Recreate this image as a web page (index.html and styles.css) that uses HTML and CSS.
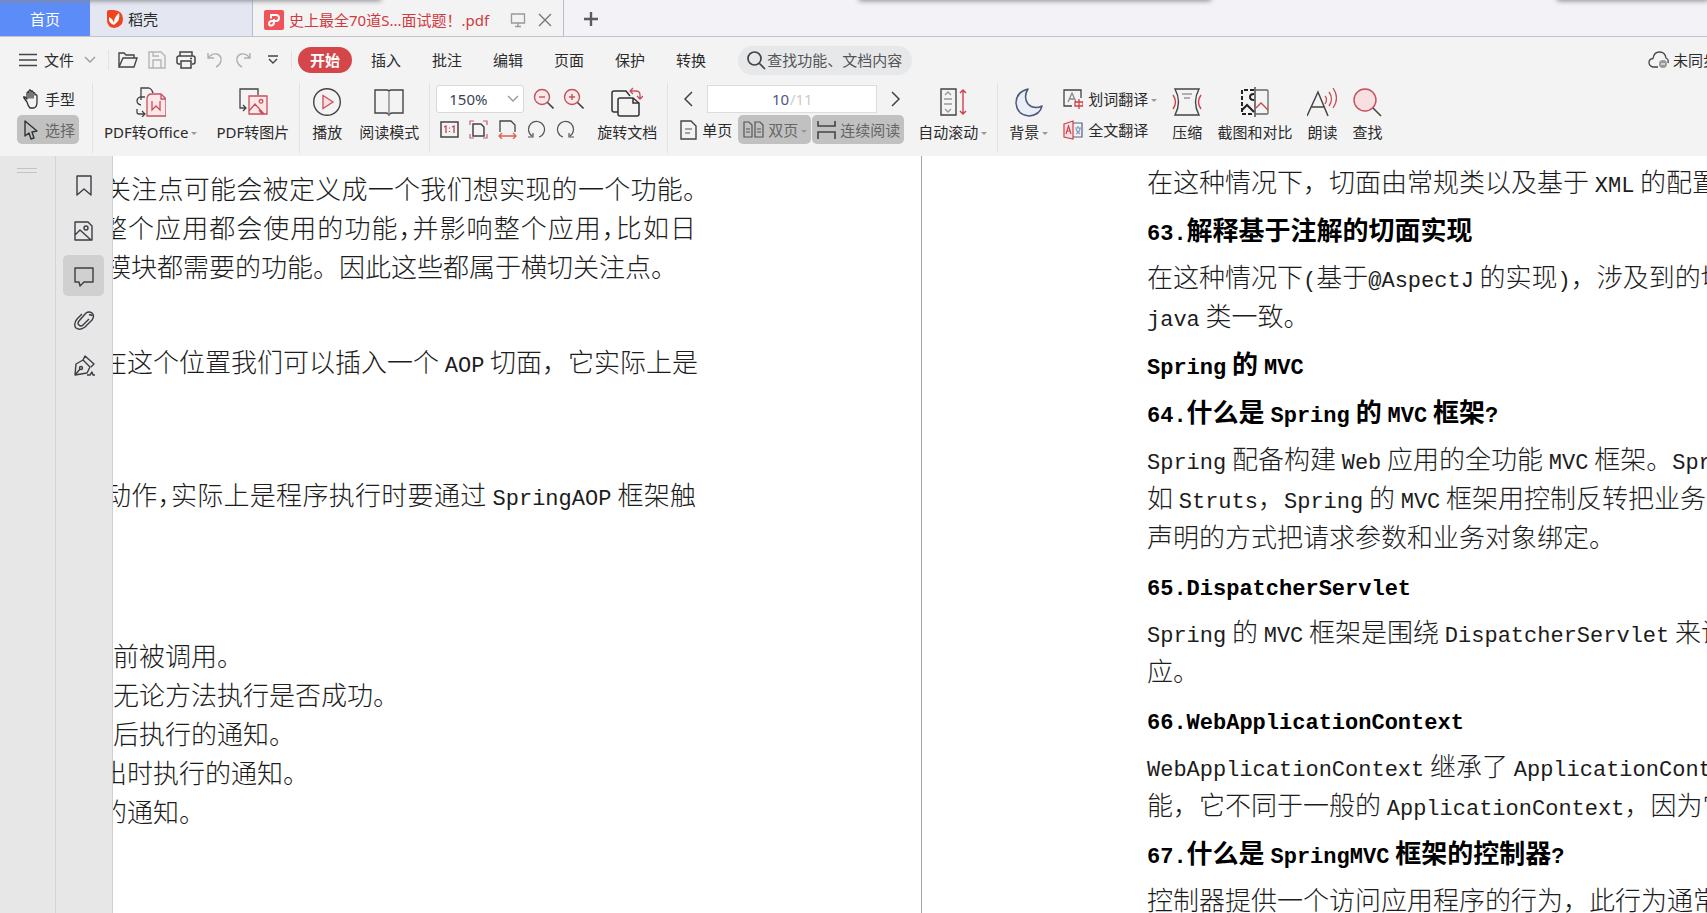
FILE: index.html
```html
<!DOCTYPE html>
<html lang="zh-CN">
<head>
<meta charset="utf-8">
<title>PDF 阅读器</title>
<link rel="stylesheet" href="styles.css">
</head>
<body>
<header class="tabbar">
  <span class="shade shade-left"></span><span class="shade shade-mid"></span><span class="shade shade-right"></span>
  <button class="tab tab-home">首页</button>
  <button class="tab tab-docer">
    <svg width="17" height="20" viewBox="0 0 17 20"><path d="M1 3Q1 1 3 1H8Q17 2 17 10T8 19Q1 18 1 11Z" fill="#f0441f"/><path d="M8 16Q2 14 3 8Q7 10 8 14Q8 8 13 4Q15 11 8 16Z" fill="#fff"/></svg>
    <span>稻壳</span>
  </button>
  <div class="tab tab-active">
    <svg width="20" height="20" viewBox="0 0 20 20"><rect width="20" height="20" rx="2" fill="#f0525a"/><path d="M7 8.500V5h5a3 3 0 0 1 0 6H8q-3 0-3 2.500t2.500 2Q10 15 10 12V9" fill="none" stroke="#fff" stroke-width="2"/></svg>
    <span class="tab-title">史上最全70道S...面试题！.pdf</span>
    <svg class="tab-screen" width="16" height="16" viewBox="0 0 16 16" fill="none" stroke="#999" stroke-width="1.3"><path d="M1.5 2h13v9h-13zM8 11v3M5 14.5h6"/></svg>
    <button class="plain" aria-label="关闭"><svg width="14" height="14" viewBox="0 0 14 14" stroke="#777" stroke-width="1.4"><path d="M1 1l12 12M13 1L1 13"/></svg></button>
  </div>
  <button class="plain tab-add" aria-label="新建"><svg width="16" height="16" viewBox="0 0 16 16" stroke="#5a5a60" stroke-width="2.4"><path d="M8 1v14M1 8h14"/></svg></button>
</header>

<nav class="menubar">
  <button class="plain file">
    <svg width="18" height="14" viewBox="0 0 18 14" stroke="#444" stroke-width="1.3"><path d="M0 1.5h18M0 7h18M0 12.5h18"/></svg>
    <span>文件</span>
    <svg class="file-arrow" width="12" height="8" viewBox="0 0 12 8" fill="none" stroke="#999" stroke-width="1.3"><path d="M1 1l5 5 5-5"/></svg>
  </button>
  <div class="quick">
    <button class="plain" aria-label="打开"><svg width="20" height="18" viewBox="0 0 20 18" fill="none" stroke="#444" stroke-width="1.4"><path d="M1 16V2h5l2 2h8v3M1 16L5 7h14l-3 9z"/></svg></button>
    <button class="plain" aria-label="保存"><svg width="18" height="18" viewBox="0 0 18 18" fill="none" stroke="#b5b5b5" stroke-width="1.4"><path d="M1 1h12l4 4v12H1zM5 17V9h8v8M5 1v4h6"/></svg></button>
    <button class="plain" aria-label="打印"><svg width="20" height="18" viewBox="0 0 20 18" fill="none" stroke="#444" stroke-width="1.5"><path d="M4 5V1h12v4M4 13H3q-2 0-2-2V7q0-2 2-2h14q2 0 2 2v4q0 2-2 2h-1M5 10h10v7H5zM14 7.500h2"/></svg></button>
    <button class="plain" aria-label="撤销"><svg width="18" height="16" viewBox="0 0 18 16" fill="none" stroke="#b0b0b0" stroke-width="1.4"><path d="M2 1v5h6M2 6q4-5 9-4 5 2 4 7-1 4-5 6"/></svg></button>
    <button class="plain" aria-label="恢复"><svg width="18" height="16" viewBox="0 0 18 16" fill="none" stroke="#b0b0b0" stroke-width="1.4"><path d="M16 1v5h-6M16 6q-4-5-9-4-5 2-4 7 1 4 5 6"/></svg></button>
    <button class="plain" aria-label="自定义"><svg width="10" height="10" viewBox="0 0 10 10" fill="none" stroke="#444" stroke-width="1.4"><path d="M0 1h10M1 4l4 4 4-4"/></svg></button>
  </div>
  <button class="pill">开始</button>
  <div class="menus">
    <button class="plain">插入</button><button class="plain">批注</button><button class="plain">编辑</button><button class="plain">页面</button><button class="plain">保护</button><button class="plain">转换</button>
  </div>
  <label class="search">
    <svg width="19" height="19" viewBox="0 0 19 19" fill="none" stroke="#444" stroke-width="1.7"><circle cx="7.500" cy="7.500" r="6.500"/><path d="M12 12l6 6"/></svg>
    <input type="text" aria-label="查找" placeholder="查找功能、文档内容">
  </label>
  <button class="plain sync">
    <svg width="21" height="18" viewBox="0 0 21 18" fill="none" stroke="#444" stroke-width="1.3"><path d="M10 16H5Q1 15 1 11.500T5 7.500Q6 1 11.500 1T18 7q3 1 2 5"/><circle cx="15" cy="13" r="4" fill="#999" stroke="none"/><path d="M13 13h4" stroke="#eee"/></svg>
    <span>未同步</span>
  </button>
</nav>

<section class="ribbon">
  <div class="group g-select">
    <div class="rows">
      <button class="small"><svg width="18" height="20" viewBox="0 0 18 20" fill="none" stroke="#333" stroke-width="1.3" stroke-linejoin="round"><path d="M5 13L2 9Q1 7 3 8l2 2V4q1-2 2 0V9V2q1-2 2 0V9V3q1-2 2 0v6V4q2-1 2 1v1q2-1 2 1v6q0 5-3 6H8q-2-2-3-6z"/></svg><span>手型</span></button>
      <button class="small pressed"><svg width="18" height="20" viewBox="0 0 18 20" fill="none" stroke="#333" stroke-width="1.4" stroke-linejoin="round"><path d="M3 1v15l4-3 2 6 3-1-2-6 5-1z"/></svg><span>选择</span></button>
    </div>
  </div>

  <div class="group g-convert">
    <button class="big"><svg width="30" height="30" viewBox="0 0 30 30" fill="none" stroke="#444" stroke-width="1.3"><path d="M5 13V1h8q3 1 4 5M9 10H4Q1 11 1 14t4 4M1 22v3q0 2 2 2h6M6 24l3 3-3 3"/><path d="M11 12q0-5 5-5h9l5 5v17H11z" fill="#fbe6e8" stroke="#c8505c"/><path d="M25 7v5h5M16 14v9l4-4 4 4v-9" stroke="#c8505c"/></svg><span>PDF转Office<i class="caret"></i></span></button>
    <button class="big"><svg width="30" height="30" viewBox="0 0 30 30" fill="none" stroke="#444" stroke-width="1.3"><path d="M20 8V2H2v19h5M5 18l3 3-3 3"/><path d="M11 9h18v18H11z" fill="#fbe6e8" stroke="#c8505c"/><path d="M11 24l6-7 9 10M24 27l-3-4M23 12.500a1.800 1.800 0 1 0 .1 0" stroke="#c8505c"/></svg><span>PDF转图片</span></button>
  </div>

  <div class="group g-view">
    <button class="big"><svg width="30" height="30" viewBox="0 0 30 30" fill="none" stroke="#444" stroke-width="1.4"><circle cx="15" cy="15" r="13.300"/><path d="M11 8.500v13L21 15z" fill="#fadfe2" stroke="#d05560"/></svg><span>播放</span></button>
    <button class="big"><svg width="30" height="30" viewBox="0 0 30 30" fill="none" stroke="#444" stroke-width="1.4"><path d="M15 4q-1-1-2-1H1v23h11q2 0 3 2 1-2 3-2h11V3H17q-1 0-2 1z"/><path d="M15 4v24" stroke="#888"/></svg><span>阅读模式</span></button>
  </div>

  <div class="group g-zoom">
    <div class="rows">
      <div class="row zoom-row">
        <div class="select-wrap">
          <select aria-label="缩放比例"><option>150%</option></select>
          <svg width="12" height="8" viewBox="0 0 12 8" fill="none" stroke="#999" stroke-width="1.4"><path d="M1 1l5 5 5-5"/></svg>
        </div>
        <button class="plain" aria-label="缩小"><svg width="21" height="21" viewBox="0 0 21 21" fill="none" stroke="#c4525c" stroke-width="1.4"><circle cx="9" cy="9" r="7.500" fill="#fbe9ea"/><path d="M6 9h6"/><path d="M14.500 14.500l6 6" stroke="#444" stroke-width="1.600"/></svg></button>
        <button class="plain" aria-label="放大"><svg width="21" height="21" viewBox="0 0 21 21" fill="none" stroke="#c4525c" stroke-width="1.4"><circle cx="9" cy="9" r="7.500" fill="#fbe9ea"/><path d="M6 9h6M9 6v6"/><path d="M14.500 14.500l6 6" stroke="#444" stroke-width="1.600"/></svg></button>
      </div>
      <div class="row tools-row">
        <button class="plain" aria-label="实际大小"><svg width="19" height="19" viewBox="0 0 19 19" fill="none" stroke="#444" stroke-width="1.5"><path d="M1 2h17v15H1z"/><path d="M4 7l2-1v7M12 7l2-1v7M9.500 7.500v1M9.500 11v1" stroke="#c4404c" stroke-width="1.300"/></svg></button>
        <button class="plain" aria-label="适合页面"><svg width="19" height="19" viewBox="0 0 19 19" fill="none" stroke="#444" stroke-width="1.5"><path d="M4 4h8l3 3v9H4z"/><path d="M1 5V1h4M14 1h4v4M18 14v4h-4M5 18H1v-4" stroke="#c8606a" stroke-width="1.200"/></svg></button>
        <button class="plain" aria-label="适合宽度"><svg width="19" height="19" viewBox="0 0 19 19" fill="none" stroke="#444" stroke-width="1.3"><path d="M2 12V1h11l4 4v7"/><path d="M1 16h17M4 13l-3 3 3 3M15 13l3 3-3 3" stroke="#d9604f"/></svg></button>
        <button class="plain" aria-label="左旋"><svg width="19" height="19" viewBox="0 0 19 19" fill="none" stroke="#555" stroke-width="1.2"><path d="M12 17A8 8 0 1 0 5 16M1 17h5v-4"/></svg></button>
        <button class="plain" aria-label="右旋"><svg width="19" height="19" viewBox="0 0 19 19" fill="none" stroke="#555" stroke-width="1.2"><path d="M7 17A8 8 0 1 1 14 16M18 17h-5v-4"/></svg></button>
      </div>
    </div>
    <button class="big"><svg width="32" height="30" viewBox="0 0 32 30" fill="none" stroke="#333" stroke-width="1.5"><path d="M7 25H3q-2 0-2-2V6q0-2 2-2h12l4 5M7 13q0-2 2-2h13l6 5v11q0 2-2 2H9q-2 0-2-2z"/><path d="M22 11v5h6" /><path d="M22 1l-3 3 3 3M19 4h6q4 0 4 4v3M26 9l3 3 3-3" stroke="#c8505c" stroke-width="1.300"/></svg><span>旋转文档</span></button>
  </div>

  <div class="group g-page">
    <div class="rows">
      <div class="row pager">
        <button class="plain" aria-label="上一页"><svg width="10" height="16" viewBox="0 0 10 16" fill="none" stroke="#444" stroke-width="1.500"><path d="M9 1L2 8l7 7"/></svg></button>
        <label class="page-box"><input type="text" value="10" aria-label="页码"><span>/11</span></label>
        <button class="plain" aria-label="下一页"><svg width="10" height="16" viewBox="0 0 10 16" fill="none" stroke="#444" stroke-width="1.500"><path d="M1 1l7 7-7 7"/></svg></button>
      </div>
      <div class="row modes">
        <button class="plain mode"><svg width="17" height="20" viewBox="0 0 17 20" fill="none" stroke="#444" stroke-width="1.400"><path d="M1 1h10l5 5v13H1z"/><path d="M5 9h7M5 13h5" stroke="#888"/></svg><span>单页</span></button>
        <button class="small pressed"><svg width="21" height="19" viewBox="0 0 21 19" fill="none" stroke="#555" stroke-width="1.200"><path d="M1 2h5l3 3v12H1zM12 2h5l3 3v12h-8zM3 9h4M14 9h4M3 12h4M14 12h4"/></svg><span>双页<i class="caret"></i></span></button>
        <button class="small pressed"><svg width="19" height="20" viewBox="0 0 19 20" fill="none" stroke="#444" stroke-width="1.600"><path d="M1 1v5h17V1M1 19v-7h17v7"/></svg><span>连续阅读</span></button>
      </div>
    </div>
    <button class="big"><svg width="28" height="30" viewBox="0 0 28 30" fill="none" stroke="#444" stroke-width="1.400"><path d="M2 2h15v26H2z"/><path d="M6 8l3-3 3 3M5 12h8M5 17h8M6 22l3 3 3-3" stroke="#999"/><path d="M24 3v24M21 6l3-3 3 3M21 24l3 3 3-3" stroke="#d04048"/></svg><span>自动滚动<i class="caret"></i></span></button>
  </div>

  <div class="group g-tools">
    <button class="big"><svg width="30" height="30" viewBox="0 0 30 30"><path d="M14 2Q2 5 2 16q1 12 13 13 11-1 13-10-8 4-14-2-5-7 0-15z" fill="#e9eef8" stroke="#4c5878" stroke-width="1.500" stroke-linejoin="round"/></svg><span>背景<i class="caret"></i></span></button>
    <div class="rows">
      <button class="plain mode"><svg width="20" height="20" viewBox="0 0 20 20" fill="none" stroke="#444" stroke-width="1.300"><path d="M9 17H1V1h17v8"/><path d="M5 13L9 4l4 9M6 10h6" stroke="#888"/><path d="M12 13h8v4h-8zM16 10v10" stroke="#d04048"/></svg><span>划词翻译<i class="caret"></i></span></button>
      <button class="plain mode"><svg width="20" height="20" viewBox="0 0 20 20" fill="none" stroke="#d04048" stroke-width="1.200"><path d="M1 4l9-3v18l-9-2z" fill="#fbe3e4"/><path d="M3 14l2.500-8L8 14M4 11h3"/><path d="M10 3h9v14h-9" stroke="#55607a"/><path d="M12 8h6M15 6v2M13 14q4-2 4-6M13 9q1 3 4 5" stroke="#7c93c4"/></svg><span>全文翻译</span></button>
    </div>
    <button class="big"><svg width="30" height="30" viewBox="0 0 30 30" fill="none" stroke="#444" stroke-width="1.400"><path d="M3 2h24q-7 13 0 26H3Q10 15 3 2z"/><path d="M10 7h10M12 11h6" stroke="#999"/><path d="M1 8q5 7 0 14M29 8q-5 7 0 14" stroke="#d04048"/></svg><span>压缩</span></button>
    <button class="big"><svg width="30" height="30" viewBox="0 0 30 30" fill="none" stroke="#222" stroke-width="2"><path d="M14 3H2v24h12" stroke-dasharray="4 2"/><path d="M2 23l5-5 7 7M14 7q-4 0-4 3t4 3"/><path d="M15 0v30" stroke-width="1.200"/><path d="M15 3h12q1 0 1 1v22q0 1-1 1H15" stroke="#666" stroke-width="1.300"/><path d="M16 21l5-5 7 7" stroke="#d04048" stroke-width="1.300"/></svg><span>截图和对比</span></button>
    <button class="big"><svg width="30" height="30" viewBox="0 0 30 30" fill="none" stroke="#444" stroke-width="1.500"><path d="M0 29L11 5l10 24M4 20h14"/><path d="M18 9q3 3 0 8M22 5q5 7 0 14M26 1q7 10 0 20" stroke="#c8505c" stroke-width="1.300"/></svg><span>朗读</span></button>
    <button class="big"><svg width="30" height="30" viewBox="0 0 30 30" fill="none" stroke="#c8505c" stroke-width="1.400"><circle cx="13" cy="13" r="11" fill="#f8dfe2"/><path d="M21 21l8 8" stroke="#444" stroke-width="1.600"/></svg><span>查找</span></button>
  </div>
</section>

<main class="workspace">
  <div class="dock"><span class="grip"></span></div>
  <aside class="side">
    <button class="side-btn" aria-label="书签"><svg width="22" height="22" viewBox="0 0 22 22"><path d="M4 1h14v19l-7-6-7 6z"/></svg></button>
    <button class="side-btn" aria-label="缩略图"><svg width="22" height="22" viewBox="0 0 22 22"><path d="M2 2h13l4 4v14H2zM2 15l5-5 11 10"/><circle cx="13" cy="8" r="2"/></svg></button>
    <button class="side-btn active" aria-label="批注"><svg width="22" height="22" viewBox="0 0 22 22"><path d="M2 3h18v14h-9l-4 4-1-4H2z"/></svg></button>
    <button class="side-btn" aria-label="附件"><svg width="22" height="22" viewBox="0 0 22 22"><path d="M9 4L4 9q-4 5-1 9 4 3 9-1l7-7q3-4 0-7-3-2-6 0l-7 8q-2 3 0 4 2 2 4 0l6-6M16 5q2-1 3 1"/></svg></button>
    <button class="side-btn" aria-label="签名"><svg width="22" height="22" viewBox="0 0 22 22"><path d="M2 20L3 9l7-4 7 7-3 6zM2 20l5-6M10 5l2-4 9 8-3 3"/><circle cx="8" cy="13" r="1.500"/><path d="M14 20h3l2-3 1 3h2"/></svg></button>
  </aside>

  <article class="page page-left">
    <p class="full cut-s">关注点可能会被定义成一个我们想实现的一个功能<span class="half">。</span></p>
    <p class="full cut-l">整个应用都会使用的功能<span class="half">，</span>并影响整个应用<span class="half">，</span>比如日</p>
    <p class="cut-s">模块都需要的功能。因此这些都属于横切关注点。</p>
    <p class="full cut-l join-point">在这个位置我们可以插入一个 <span class="en">AOP</span> 切面，它实际上是</p>
    <p class="full cut-s advice">动作<span class="half">，</span>实际上是程序执行时要通过 <span class="en">SpringAOP</span> 框架触</p>
    <p class="kinds">前被调用。</p>
    <p>无论方法执行是否成功。</p>
    <p>后执行的通知。</p>
    <p class="cut-l">出时执行的通知。</p>
    <p class="cut-l">的通知。</p>
  </article>

  <article class="page page-right">
    <p>在这种情况下，切面由常规类以及基于 <span class="en">XML</span> 的配置</p>
    <h2><span class="en">63.</span>解释基于注解的切面实现</h2>
    <p>在这种情况下<span class="en">(</span>基于<span class="en">@AspectJ</span> 的实现<span class="en">)</span>，涉及到的切</p>
    <p><span class="en">java</span> 类一致。</p>
    <h2><span class="en">Spring</span> 的 <span class="en">MVC</span></h2>
    <h2><span class="en">64.</span>什么是 <span class="en">Spring</span> 的 <span class="en">MVC</span> 框架<span class="en">?</span></h2>
    <p><span class="en">Spring</span> 配备构建 <span class="en">Web</span> 应用的全功能 <span class="en">MVC</span> 框架。<span class="en">Spring</span></p>
    <p>如 <span class="en">Struts</span>，<span class="en">Spring</span> 的 <span class="en">MVC</span> 框架用控制反转把业务</p>
    <p>声明的方式把请求参数和业务对象绑定。</p>
    <h2><span class="en">65.DispatcherServlet</span></h2>
    <p><span class="en">Spring</span> 的 <span class="en">MVC</span> 框架是围绕 <span class="en">DispatcherServlet</span> 来设</p>
    <p>应。</p>
    <h2><span class="en">66.WebApplicationContext</span></h2>
    <p><span class="en">WebApplicationContext</span> 继承了 <span class="en">ApplicationContext</span></p>
    <p>能，它不同于一般的 <span class="en">ApplicationContext</span>，因为它</p>
    <h2><span class="en">67.</span>什么是 <span class="en">SpringMVC</span> 框架的控制器<span class="en">?</span></h2>
    <p>控制器提供一个访问应用程序的行为，此行为通常</p>
  </article>
</main>
</body>
</html>
```
FILE: styles.css
```css
* { box-sizing: border-box; }

body {
  margin: 0;
  height: 100vh;
  display: flex;
  flex-direction: column;
  overflow: hidden;
  background: #f3f3f3;
  color: #2b2b2b;
  font: 15px/20px "Noto Sans", "Noto Sans CJK SC", sans-serif;
}

button, input, select {
  font: inherit;
  color: inherit;
}

button {
  display: flex;
  align-items: center;
  padding: 0;
  border: 0;
  background: none;
  white-space: nowrap;
}

svg { display: block; flex: none; }

/* Tab bar */
.tabbar {
  position: relative;
  flex: none;
  display: flex;
  height: 37px;
  overflow: hidden;
  background: #f2f2f7;
  border-bottom: 1px solid #c4c4c8;
}

.shade {
  position: absolute;
  top: -6px;
  height: 6px;
  box-shadow: 0 0 5px 1px #8a8a92;
}
.shade-left { left: 0; width: 380px; }
.shade-mid { left: 860px; width: 350px; }
.shade-right { left: 1558px; right: 0; }

.tab { display: flex; align-items: center; padding-top: 2px; }
.tab-home { width: 90px; justify-content: center; background: #5c8cf8; color: #fff; }
.tab-docer {
  width: 163px;
  padding-left: 16px;
  gap: 5px;
  background: #e4e7f1;
  border-right: 1px solid #b9bccb;
}
.tab-active {
  height: 37px;
  width: 311px;
  padding-left: 11px;
  background: #f3f3f3;
  border-right: 1px solid #b9bccb;
  color: #d0393f;
}
.tab-title { width: 222px; margin-left: 5px; white-space: nowrap; }
.tab-screen { margin-right: 12px; margin-left: -1px; }
.tab-add { padding: 2px 0 0 19px; }

/* Menu bar */
.menubar {
  flex: none;
  display: flex;
  align-items: center;
  height: 46px;
  padding-left: 19px;
  overflow: hidden;
}
.file { gap: 7px; padding-right: 12px; border-right: 1px solid #e2e2e2; }
.file-arrow { margin-left: 3px; }
.quick {
  display: flex;
  align-items: center;
  gap: 10px;
  padding: 0 13px 0 9px;
  border-right: 1px solid #e2e2e2;
}
.quick button:last-child { margin-left: 6px; }
.pill {
  height: 26px;
  margin-left: 6px;
  padding: 0 12px;
  border-radius: 13px;
  background: #d5464b;
  color: #fff;
  font-weight: bold;
}
.menus { display: flex; gap: 31px; margin-left: 19px; }
.search {
  display: flex;
  align-items: center;
  width: 174px;
  height: 29px;
  margin-left: 32px;
  padding-left: 9px;
  border-radius: 15px;
  background: #e7e8ea;
}
.search input {
  flex: 1;
  min-width: 0;
  padding: 0 0 0 1px;
  border: 0;
  background: none;
}
.search input::placeholder { color: #555; opacity: 1; }
.sync { flex: none; gap: 4px; margin-left: auto; margin-right: -11px; }

/* Ribbon */
.ribbon {
  flex: none;
  display: flex;
  height: 73px;
  padding-left: 17px;
}
.group {
  display: flex;
  height: 70px;
  padding-top: 1px;
  border-right: 1px solid #e2e2e2;
}
.g-select { padding-right: 13px; }
.g-convert { gap: 19px; padding-left: 11px; padding-right: 10px; }
.g-view { gap: 17px; padding-left: 12px; padding-right: 10px; }
.g-zoom { gap: 13px; padding-left: 6px; padding-right: 10px; }
.g-page { gap: 14px; padding-left: 12px; padding-right: 10px; }
.g-tools { gap: 15px; padding-left: 11px; border-right: 0; }

.big {
  flex-direction: column;
  align-self: flex-start;
  gap: 5px;
  padding-top: 3px;
}
.rows { display: flex; flex-direction: column; gap: 2px; }
.row { display: flex; align-items: center; height: 29px; }
.small {
  height: 29px;
  gap: 5px;
  padding: 0 4px 0 5px;
  border-radius: 5px;
}
.pressed { background: #c1c1c1; color: #666; }
.mode { height: 29px; gap: 5px; }
.caret {
  display: inline-block;
  margin-left: 3px;
  border: 3px solid transparent;
  border-top-color: #999;
  border-bottom: 0;
  vertical-align: middle;
}

.zoom-row { gap: 9px; }
.select-wrap { position: relative; }
.select-wrap select {
  display: block;
  appearance: none;
  width: 88px;
  height: 28px;
  padding: 0 0 0 12px;
  border: 1px solid #d8d8d8;
  border-radius: 3px;
  background: #fff;
  color: #3a3f55;
}
.select-wrap svg { position: absolute; right: 5px; top: 10px; }
.tools-row { gap: 10px; padding-left: 4px; }

.pager { gap: 14px; padding: 0 3px; }
.page-box {
  flex: 1;
  display: flex;
  justify-content: center;
  align-items: center;
  height: 28px;
  border: 1px solid #dcdcdc;
  background: #fff;
  color: #ccc;
}
.page-box input {
  width: 18px;
  padding: 0;
  border: 0;
  background: none;
  color: #50558a;
}
.modes { gap: 1px; }
.modes .mode { margin-right: 5px; }
.modes .small { gap: 4px; }

/* Workspace */
.workspace {
  flex: 1;
  display: flex;
  min-height: 0;
  background: #fff;
}
.dock {
  flex: none;
  width: 56px;
  padding: 12px 0 0 17px;
  background: #e7e7e7;
  border-right: 1px solid #d4d4d4;
}
.grip {
  display: block;
  width: 20px;
  height: 5px;
  border: 1px solid #c4c4c4;
  border-width: 1px 0;
}
.side {
  flex: none;
  display: flex;
  flex-direction: column;
  gap: 4px;
  width: 57px;
  padding: 9px 7px 0;
  background: #e7e7e7;
  border-right: 1px solid #d0d0d0;
  z-index: 1;
}
.side-btn {
  justify-content: center;
  width: 41px;
  height: 41px;
  border-radius: 5px;
}
.side-btn.active { background: #d0d0d0; }
.side-btn svg {
  fill: none;
  stroke: #3c3c44;
  stroke-width: 1.4;
  stroke-linejoin: round;
}

.page {
  overflow: hidden;
  color: #1c1c1c;
  font-family: "Noto Sans CJK SC", sans-serif;
  font-size: 26px;
  line-height: 39px;
  font-weight: 300;
  white-space: nowrap;
}
.page p { margin: 0; }
.page h2 {
  margin: 9px 0 8px;
  font-size: 26px;
  line-height: 39px;
  font-weight: bold;
  color: #000;
}
.page-left {
  flex: none;
  width: 809px;
  padding: 12px 225px 0 0;
  border-right: 1px solid #a4a4a4;
}
.page-right {
  flex: 1;
  min-width: 0;
  padding: 5px 0 0 225px;
}
.page .full { text-align: justify; text-align-last: justify; }
.page .cut-s { margin-left: -8px; }
.page .cut-l { margin-left: -12px; }
.page .join-point { margin-top: 56px; }
.page .advice { margin-top: 94px; }
.page .kinds { margin-top: 122px; }

.half { font-feature-settings: "halt"; }
.en {
  font-family: "Liberation Mono", monospace;
  font-size: 22px;
  line-height: 22px;
}
```
